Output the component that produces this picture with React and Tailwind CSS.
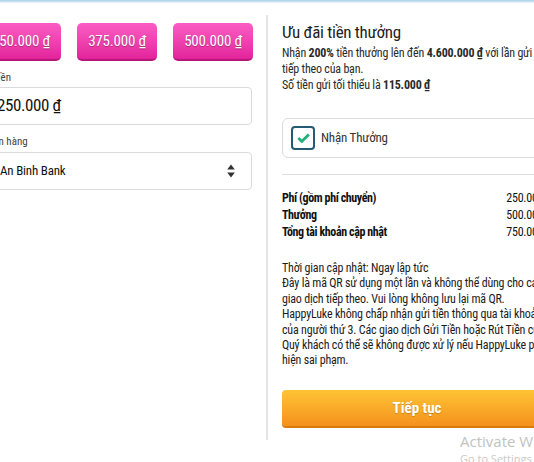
import React from "react";

function PinkBtn({ children }) {
  return (
    <div className="w-[80px] h-[38px] shrink-0 rounded-[5px] bg-gradient-to-b from-[#fb5cc4] to-[#e2229b] border-b-2 border-[#b8177a] flex items-center justify-center text-white text-[15px] tracking-[-0.2px] [text-shadow:0_1px_1px_rgba(0,0,0,0.3)]">
      {children}
    </div>
  );
}

function Row({ label, value }) {
  return (
    <div className="flex justify-between whitespace-nowrap">
      <span className="font-bold tracking-[-0.4px]">{label}</span>
      <span className="tracking-[-0.2px]">{value}</span>
    </div>
  );
}

export default function App() {
  return (
    <div className="relative w-[534px] h-[462px] overflow-hidden bg-white text-[#1c1c1c] font-['Roboto_Condensed',sans-serif]">
      <div className="h-[3px] bg-gradient-to-b from-[#a6cfe6] to-[#eef7fc]" />
      <div className="flex ml-[-19px]">
        {/* left column */}
        <div className="w-[285px] shrink-0 pt-[20px] pr-[14px]">
          <div className="flex gap-[16px]">
            <PinkBtn>250.000 ₫</PinkBtn>
            <PinkBtn>375.000 ₫</PinkBtn>
            <PinkBtn>500.000 ₫</PinkBtn>
          </div>
          <div className="mt-[10px] text-[11px] leading-[14px] text-[#444]">Số tiền</div>
          <div className="mt-[2px] h-[38px] rounded-[4px] border border-[#dadada] flex items-center pl-[15px] text-[17px] tracking-[-0.4px] text-[#111]">
            250.000 ₫
          </div>
          <div className="mt-[10px] text-[11px] leading-[14px] text-[#444]">Ngân hàng</div>
          <div className="mt-[3px] h-[38px] rounded-[4px] border border-[#dadada] flex items-center justify-between pl-[18px] pr-[16px] text-[13px] tracking-[-0.2px] text-[#111]">
            <span>An Binh Bank</span>
            <svg width="8" height="14" viewBox="0 0 8 14">
              <path d="M4 0.5 L7.8 5.6 L0.2 5.6 Z" fill="#333" />
              <path d="M4 13.5 L7.8 8.4 L0.2 8.4 Z" fill="#333" />
            </svg>
          </div>
        </div>
        {/* divider */}
        <div className="w-[2px] shrink-0 mt-[12px] h-[425px] bg-[#e4e4e4]" />
        {/* right column */}
        <div className="w-[284px] shrink-0 pl-[14px] pt-[19px] text-[12px] leading-[16px]">
          <div className="text-[17px] leading-[20px] tracking-[-0.3px] text-[#222]">Ưu đãi tiền thưởng</div>
          <div className="mt-[3px] text-[#2a2a2a] tracking-[-0.2px] whitespace-nowrap">
            <div>
              Nhận <b>200%</b> tiền thưởng lên đến <b>4.600.000 ₫</b> với lần gửi
            </div>
            <div>tiếp theo của bạn.</div>
            <div>
              Số tiền gửi tối thiểu là <b>115.000 ₫</b>
            </div>
          </div>
          <div className="mt-[25px] h-[40px] rounded-[6px] border border-[#dcdcdc] flex items-center pl-[8px] gap-[6px]">
            <div className="w-[24px] h-[24px] rounded-[4px] border-2 border-[#245b73] flex items-center justify-center">
              <svg width="13" height="10" viewBox="0 0 13 10">
                <path d="M1.3 5 L4.8 8.4 L11.8 1.4" stroke="#1fb27a" strokeWidth="2.8" fill="none" />
              </svg>
            </div>
            <span className="text-[13px] tracking-[-0.2px] text-[#333]">Nhận Thưởng</span>
          </div>
          <div className="mt-[16px] h-px bg-[#dcdcdc]" />
          <div className="mt-[15px] flex flex-col text-[#111] leading-[17px]">
            <Row label="Phí (gồm phí chuyển)" value="250.000 ₫" />
            <Row label="Thưởng" value="500.000 ₫" />
            <Row label="Tổng tài khoản cập nhật" value="750.000 ₫" />
          </div>
          <div className="mt-[20px] text-[#1c1c1c] leading-[15.4px] tracking-[-0.2px] whitespace-nowrap">
            <div>Thời gian cập nhật: Ngay lập tức</div>
            <div>Đây là mã QR sử dụng một lần và không thể dùng cho các</div>
            <div>giao dịch tiếp theo. Vui lòng không lưu lại mã QR.</div>
            <div>HappyLuke không chấp nhận gửi tiền thông qua tài khoản</div>
            <div>của người thứ 3. Các giao dịch Gửi Tiền hoặc Rút Tiền của</div>
            <div>Quý khách có thể sẽ không được xử lý nếu HappyLuke phát</div>
            <div>hiện sai phạm.</div>
          </div>
          <div className="mt-[21px] h-[38px] rounded-[4px] bg-gradient-to-b from-[#fdc435] to-[#f5911c] border-b-2 border-[#d9790f] flex items-center justify-center text-white text-[15px] font-bold [text-shadow:0_1px_1px_rgba(0,0,0,0.2)]">
            Tiếp tục
          </div>
        </div>
      </div>
      <div className="absolute left-[460px] top-[431px] text-[#c2c2c2] text-[15px] leading-[20px] whitespace-nowrap font-['Open_Sans',sans-serif]">
        Activate Windows
      </div>
      <div className="absolute left-[460px] top-[452px] text-[#cacaca] text-[11px] leading-[14px] whitespace-nowrap font-['Open_Sans',sans-serif]">
        Go to Settings to activate Windows.
      </div>
    </div>
  );
}
